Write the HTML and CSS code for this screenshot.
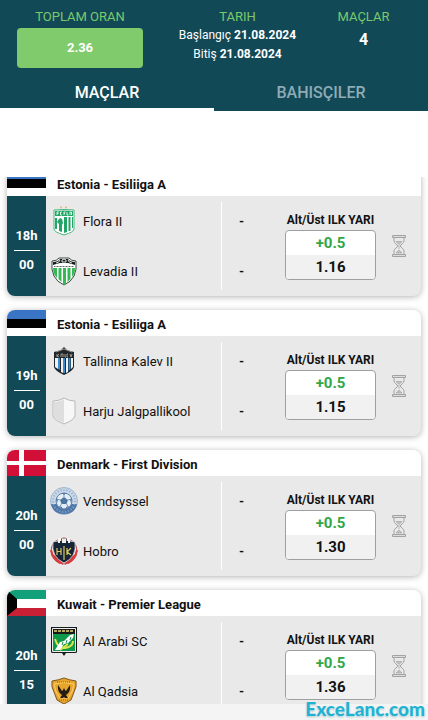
FILE: index.html
```html
<!DOCTYPE html>
<html lang="tr">
<head>
<meta charset="utf-8">
<meta name="viewport" content="width=device-width, initial-scale=1">
<title>Maçlar</title>
<link rel="stylesheet" href="styles.css">
</head>
<body>
<svg class="defs" aria-hidden="true">
  <symbol id="hourglass" viewBox="0 0 14 22">
    <g fill="none" stroke="#a3a3a3" stroke-width="1">
      <path d="M.5 .5h13v2H.5zM.5 19.500h13v2H.5z" fill="#dcdcdc"/>
      <path d="M2 2.500v3.500C2 8.500 5.700 9.500 5.700 11S2 13.500 2 16v3.500M12 2.500v3.500c0 2.500-3.700 3.500-3.700 5s3.700 2.500 3.700 5v3.500"/>
      <path d="M4 6.500h6L7 9.500zM7 10v4M4 18l3-3 3 3z" fill="#c2c2c2" stroke-width=".7"/>
    </g>
  </symbol>
  <symbol id="estonia" viewBox="0 0 39 26" preserveAspectRatio="none">
    <path fill="#fff" d="M0 0h39v26H0z"/><path fill="#3975c4" d="M0 0h39v9H0z"/><path fill="#020203" d="M0 9h39v9H0z"/>
  </symbol>
  <symbol id="denmark" viewBox="0 0 39 26" preserveAspectRatio="none">
    <path fill="#d20f37" d="M0 0h39v26H0z"/><path fill="#fff" d="M12 0h5v26h-5zM0 11h39v4H0z"/>
  </symbol>
  <symbol id="kuwait" viewBox="0 0 39 26" preserveAspectRatio="none">
    <path fill="#fff" d="M0 0h39v26H0z"/><path fill="#12a07a" d="M0 0h39v9H0z"/><path fill="#ca2035" d="M0 18h39v8H0z"/><path fill="#020203" d="M0 0l10 9v9L0 26z"/>
  </symbol>
  <symbol id="flora" viewBox="0 0 28 30">
    <path fill="#d9b56a" d="M11 0l1 1.500-1 1-1-1zM16 0l1 1.500-1 1-1-1z"/>
    <path fill="#fff" stroke="#46b67e" d="M4 4q10-1 20 0v19q0 3-10 6Q4 26 4 23z"/>
    <path fill="#22a567" d="M5 5q9-1 18 0v5H5z"/>
    <path fill="none" stroke="#e5fff0" stroke-width=".9" d="M7 9V6h2M7 7.500h1.500M12 6h-1.500v3H12M14 9V6h1.500M14 7.500h1M17 6v3h1.500M20 9V6h1.500v3"/>
    <path fill="#22a567" d="M5 12h2v11H5zM9 13l1-1 2 1 1 4-1 2v7l-3-1v-7l-2-2zM14 11h3v15l-3 1zM18.500 11h2v14h-2zM22 11h1v11h-1z"/>
  </symbol>
  <symbol id="levadia" viewBox="0 0 28 30">
    <path fill="#fff" stroke="#3b4541" stroke-width="1" d="M2 5q5 0 7-3h10q2 3 7 3 2 18-12 24Q0 23 2 5z"/>
    <path fill="#161c1b" d="M3 6q5 0 7-3h8q2 3 7 3v3q-3-1-7-2H10Q6 8 3 9z"/>
    <path fill="none" stroke="#dce9e0" d="M6 7q3 0 4-3M22 7q-3 0-4-3M12 4l2-1 2 1v2h-4z"/>
    <path stroke="#56635c" stroke-dasharray="1 .5" d="M4 10.500h20"/>
    <path fill="#35b955" d="M3 12h4v10q-4-4-4-10zM8.500 12h3v14l-3-3zM13 12h3v16l-2 1-1-1zM17.500 12h3v11l-3 3zM22 12h3q0 6-3 9z"/>
  </symbol>
  <symbol id="kalev" viewBox="0 0 28 30">
    <path fill="#22262a" d="M14 1l3 3 7 2v15q-1 4-10 8Q5 25 4 21V6l7-2z"/>
    <path fill="#f1f1ee" d="M5 12h3v11l-3-2zM11 12h2v15l-2-1zM16 12h2v14l-2 1zM21 12h2v9l-2 2z"/>
    <path fill="#328dd2" d="M8 12h2v12l-2-1zM13 12h2v15h-2zM18.500 12h2v11l-2 2z"/>
    <path fill="none" stroke="#b7b0a5" stroke-width=".8" d="M6 6l8-3 8 3M7 8v3M9 8l-2 2 2 1M11 11V8h2v3M15 8v3h1M18 8h-1v3h1M20 8l1 3 1-3"/>
  </symbol>
  <symbol id="shield" viewBox="0 0 28 30">
    <path fill="#f7f7f7" stroke="#b9b9b9" d="M14 2q5 3 11 3v15q-1 4-11 8Q4 24 3 20V5q6 0 11-3z"/>
    <path fill="#dedede" d="M14 3v24Q4 23 4 20V6q6 0 10-3z"/>
  </symbol>
  <symbol id="vendsyssel" viewBox="0 0 28 30">
    <circle cx="14" cy="15" r="13.500" fill="#cbd9e8" stroke="#9cb5ce"/>
    <path fill="#4f78a8" d="M1 18h26q-2 10-13 10T1 18z"/>
    <circle cx="14" cy="15" r="11" fill="none" stroke="#86a4c3" stroke-width="2" stroke-dasharray="1 2"/>
    <circle cx="14" cy="15" r="8" fill="#e5edf5" stroke="#587eaa"/>
    <path fill="#4d75a3" d="M14 11l4 3-1.500 4h-5L10 14zM12 7h4l-2 2zM6 12l2 2-1 3zM22 12l-2 2 1 3zM9 20l3 1v2zM19 20l-3 1v2z"/>
    <path fill="none" stroke="#4d75a3" stroke-width=".7" d="M14 11V8M18 14l3-1M10 14l-3-1M11.500 18l-2 3M16.500 18l2 3"/>
  </symbol>
  <symbol id="hobro" viewBox="0 0 28 30">
    <circle cx="14" cy="15" r="13" fill="#f5eeee" stroke="#b74d50"/>
    <path fill="none" stroke="#dc393c" stroke-width="2" d="M1 14q2 9 9 13M5 19q3 6 8 9M27 14q-2 9-9 13M23 19q-3 6-8 9"/>
    <path fill="#162438" stroke="#e6e7e8" stroke-width=".7" d="M3 6l5-1V2h4v3h4V2h4v3l5 1q2 15-11 21Q1 21 3 6z"/>
    <path fill="#f2f2ee" d="M8 2h3v3h6V2h3v5H8z"/><path fill="#162438" d="M10 5h2v3h-2zM16 5h2v3h-2z"/>
    <path fill="none" stroke="#d9c85e" stroke-width="1.200" d="M7 12v7M11 12v7M7 15.500h4M14 10v14M17 12v7M21 12l-4 4 4 3"/>
  </symbol>
  <symbol id="arabi" viewBox="0 0 28 30">
    <path fill="#171a18" d="M1 1h26v25q0 1-2 1h-9l-2 3-2-3H3q-2 0-2-1z"/>
    <path fill="none" stroke="#eee" d="M2.500 2.500h23v23h-23z"/>
    <path fill="#10994b" d="M3 8h22v17H3z"/>
    <path stroke="#b9aa64" stroke-width="2" stroke-dasharray="3 1" d="M4 5h20"/>
    <path fill="none" stroke="#dce44d" stroke-width="2" d="M5 13q3 10 10 9Q23 21 23 15M10 24l8-6"/>
    <path fill="#fff" d="M5 24l5-8 4-1 6-6 4-1-1 4-5 5-4 1-4 6z"/>
    <path fill="none" stroke="#198a4b" d="M12 19l1-3M16 17l1-3M20 14l1-3"/>
  </symbol>
  <symbol id="qadsia" viewBox="0 0 28 30">
    <path fill="#e7a52c" stroke="#7d581b" d="M2 5q7-1 12-3 5 2 12 3 1 6-2 11l-3 8-7 4-7-4-3-8Q1 11 2 5z"/>
    <path fill="none" stroke="#ffd06b" d="M4 8q10-3 20 0-1 9-6 14h-8Q5 17 4 8z"/>
    <path stroke="#976718" stroke-dasharray="1 1" d="M7 6h14M9 24h10"/>
    <path fill="#241d14" d="M8 9q-1 7 4 10l-2 3h3l1-1 1 1h3l-2-3q5-3 4-10l-4 6-1-1-1-2-1 2-1 1z"/>
  </symbol>
</svg>

<div class="app">
  <header class="top">
    <div class="summary">
      <section class="stat"><h2>TOPLAM ORAN</h2><div class="total">2.36</div></section>
      <section class="stat"><h2>TARIH</h2><p class="date">Başlangıç <b>21.08.2024</b></p><p class="date">Bitiş <b>21.08.2024</b></p></section>
      <section class="stat"><h2>MAÇLAR</h2><p class="count">4</p></section>
    </div>
    <nav class="tabs">
      <button type="button" class="tab active">MAÇLAR</button>
      <button type="button" class="tab">BAHISÇILER</button>
    </nav>
  </header>

  <main class="viewport">
    <div class="matches">
      <article class="card">
        <header class="league"><svg class="flag"><use href="#estonia"/></svg><h3>Estonia - Esiliiga A</h3></header>
        <div class="match">
          <div class="time"><span>18h</span><span>00</span></div>
          <div class="teams"><div class="team"><svg><use href="#flora"/></svg>Flora II</div><div class="team"><svg><use href="#levadia"/></svg>Levadia II</div></div>
          <div class="score"><span>-</span><span>-</span></div>
          <div class="market"><h4>Alt/Üst ILK YARI</h4><button type="button" class="odds"><span class="pick">+0.5</span><span class="price">1.16</span></button></div>
          <svg class="pending"><use href="#hourglass"/></svg>
        </div>
      </article>
      <article class="card">
        <header class="league"><svg class="flag"><use href="#estonia"/></svg><h3>Estonia - Esiliiga A</h3></header>
        <div class="match">
          <div class="time"><span>19h</span><span>00</span></div>
          <div class="teams"><div class="team"><svg><use href="#kalev"/></svg>Tallinna Kalev II</div><div class="team"><svg><use href="#shield"/></svg>Harju Jalgpallikool</div></div>
          <div class="score"><span>-</span><span>-</span></div>
          <div class="market"><h4>Alt/Üst ILK YARI</h4><button type="button" class="odds"><span class="pick">+0.5</span><span class="price">1.15</span></button></div>
          <svg class="pending"><use href="#hourglass"/></svg>
        </div>
      </article>
      <article class="card">
        <header class="league"><svg class="flag"><use href="#denmark"/></svg><h3>Denmark - First Division</h3></header>
        <div class="match">
          <div class="time"><span>20h</span><span>00</span></div>
          <div class="teams"><div class="team"><svg><use href="#vendsyssel"/></svg>Vendsyssel</div><div class="team"><svg><use href="#hobro"/></svg>Hobro</div></div>
          <div class="score"><span>-</span><span>-</span></div>
          <div class="market"><h4>Alt/Üst ILK YARI</h4><button type="button" class="odds"><span class="pick">+0.5</span><span class="price">1.30</span></button></div>
          <svg class="pending"><use href="#hourglass"/></svg>
        </div>
      </article>
      <article class="card">
        <header class="league"><svg class="flag"><use href="#kuwait"/></svg><h3>Kuwait - Premier League</h3></header>
        <div class="match">
          <div class="time"><span>20h</span><span>15</span></div>
          <div class="teams"><div class="team"><svg><use href="#arabi"/></svg>Al Arabi SC</div><div class="team"><svg><use href="#qadsia"/></svg>Al Qadsia</div></div>
          <div class="score"><span>-</span><span>-</span></div>
          <div class="market"><h4>Alt/Üst ILK YARI</h4><button type="button" class="odds"><span class="pick">+0.5</span><span class="price">1.36</span></button></div>
          <svg class="pending"><use href="#hourglass"/></svg>
        </div>
      </article>
    </div>
  </main>
  <footer class="bottom"><span class="watermark">ExceLanc.com</span></footer>
</div>
</body>
</html>
```

FILE: styles.css
```css
* { box-sizing: border-box; }
body { margin: 0; background: #fff; color: #111; font-family: Roboto, "Liberation Sans", sans-serif; font-size: 13px; }
h2, h3, h4, p { margin: 0; }
button { margin: 0; padding: 0; border: 0; font-family: inherit; cursor: pointer; }
.defs { position: absolute; width: 0; height: 0; }

.app { display: flex; flex-direction: column; height: 100vh; }

.top { flex: none; background: #124957; color: #fff; }
.summary { display: grid; grid-template-columns: 160fr 155fr 97fr; padding: 9px 16px 0 0; }
.stat { text-align: center; }
.stat h2 { font-size: 13px; font-weight: 400; line-height: 16px; color: #7bc96c; }
.total { margin: 3px 17px 0; height: 40px; line-height: 40px; border-radius: 4px; background: #80cb6c; font-size: 13px; font-weight: 700; }
.date { font-size: 12px; line-height: 19px; }
.stat h2 + p { margin-top: 1px; }
.count { font-size: 16px; font-weight: 700; line-height: 28px; }
.tabs { display: flex; margin-top: 7px; }
.tab { flex: 1; height: 36px; padding-top: 2px; background: none; color: #8fabb5; font-size: 16px; font-weight: 500; border-bottom: 3px solid transparent; }
.tab.active { color: #fff; border-bottom-color: #fff; }

.viewport { flex: 1; min-height: 0; margin-top: 66px; overflow: hidden; }
.matches { display: flex; flex-direction: column; gap: 14px; margin-top: -7px; padding: 0 7px; }
.card { flex: none; border-radius: 8px; overflow: hidden; background: #e9e9e9; box-shadow: 0 1px 6px rgba(0, 0, 0, .3); }
.league { display: flex; align-items: center; height: 26px; background: #fff; }
.flag { width: 39px; height: 26px; }
.league h3 { margin-left: 11px; padding-top: 3px; font-size: 13px; font-weight: 700; line-height: 18px; }
.match { display: grid; grid-template-columns: 39px 1fr 64px 91px 45px; height: 100px; }
.time { display: flex; flex-direction: column; align-items: center; justify-content: center; padding-top: 8px; background: #124957; color: #fff; font-weight: 700; }
.time span { width: 26px; line-height: 28px; text-align: center; }
.time span + span { border-top: 1px solid #fff; }
.teams, .score { display: grid; grid-template-rows: 1fr 1fr; align-items: center; }
.team { display: flex; align-items: center; gap: 5px; padding-left: 4px; }
.team svg { width: 28px; height: 30px; }
.score { padding-left: 18px; background: linear-gradient(#fff, #fff) left center / 1px 88px no-repeat; font-weight: 700; }
.market { padding-top: 16px; text-align: center; }
.market h4 { font-size: 12px; line-height: 16px; font-weight: 700; white-space: nowrap; }
.odds { display: block; width: 100%; margin-top: 2px; border: 1px solid #9da0a3; border-radius: 4px; overflow: hidden; color: #111; background: #fff; font-weight: 700; }
.odds span { display: block; height: 24px; line-height: 25px; font-size: 15px; }
.odds .pick { color: #30a748; }
.odds .price { background: #f1f1f1; }
.pending { align-self: center; justify-self: center; width: 14px; height: 22px; }

.bottom { position: relative; flex: none; height: 16px; background: #f4f4f4; }
.watermark { position: absolute; right: 3px; bottom: -1px; color: #21b2d2; font-family: Lato, Roboto, sans-serif; font-size: 19px; font-weight: 900; line-height: 24px; text-shadow: 0 0 2px #fff, 0 1px 2px #93bac3; }
```
